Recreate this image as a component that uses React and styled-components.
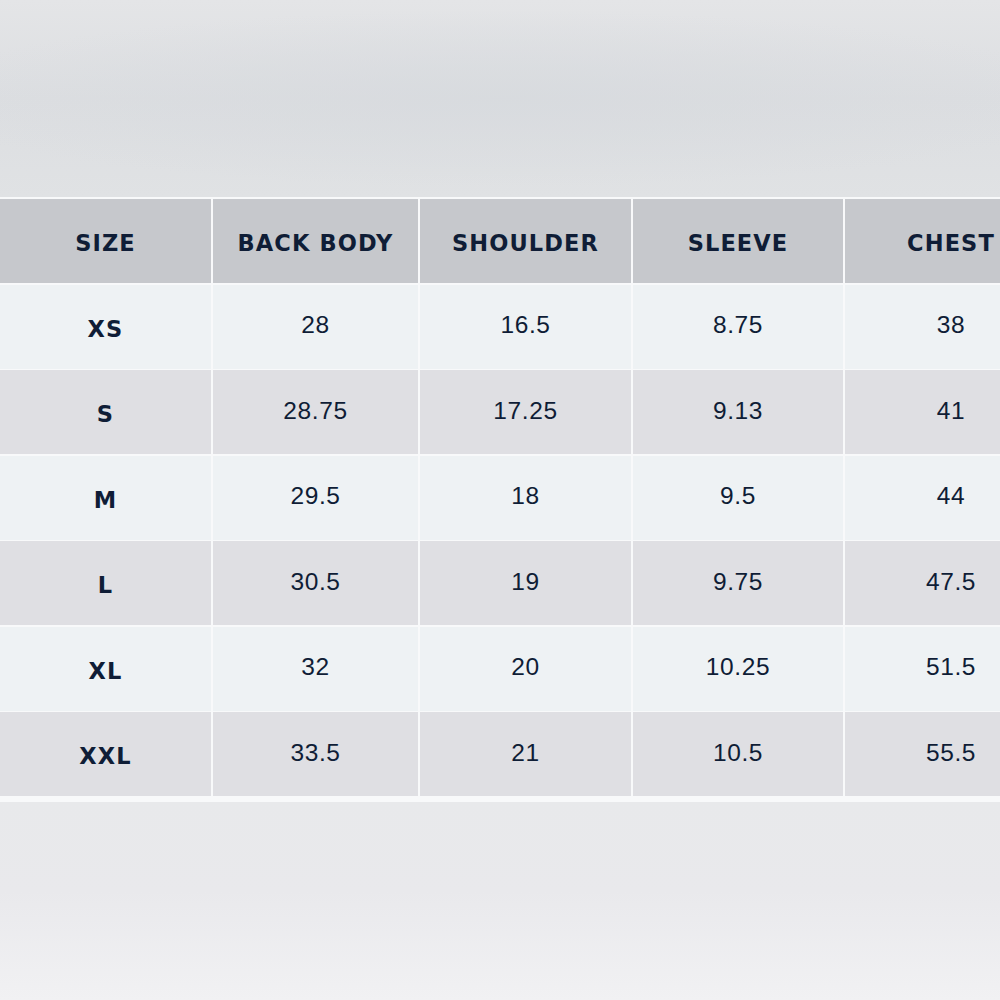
import React from "react";
import styled, { createGlobalStyle } from "styled-components";

const GlobalStyle = createGlobalStyle`
  html, body {
    margin: 0;
    padding: 0;
    background: #e6e7e9;
  }
  body {
    width: 1000px;
    height: 1000px;
    overflow: hidden;
  }
`;

const COLUMNS = ["SIZE", "BACK BODY", "SHOULDER", "SLEEVE", "CHEST"];

const ROWS = [
  ["XS", "28", "16.5", "8.75", "38"],
  ["S", "28.75", "17.25", "9.13", "41"],
  ["M", "29.5", "18", "9.5", "44"],
  ["L", "30.5", "19", "9.75", "47.5"],
  ["XL", "32", "20", "10.25", "51.5"],
  ["XXL", "33.5", "21", "10.5", "55.5"],
];

function App() {
  return (
    <>
      <GlobalStyle />
      <Page>
        <TopBand />
        <TableFrame>
          <Table>
            {COLUMNS.map((col) => (
              <HeadCell key={col}>{col}</HeadCell>
            ))}
            {ROWS.map((row, i) =>
              row.map((value, j) =>
                j === 0 ? (
                  <LabelCell key={`${i}-${j}`} $even={i % 2 === 1}>
                    {value}
                  </LabelCell>
                ) : (
                  <ValueCell key={`${i}-${j}`} $even={i % 2 === 1}>
                    {value}
                  </ValueCell>
                )
              )
            )}
          </Table>
        </TableFrame>
        <BottomBand />
      </Page>
    </>
  );
}

const Page = styled.div`
  width: 1000px;
  height: 1000px;
  display: flex;
  flex-direction: column;
  overflow: hidden;
`;

const TopBand = styled.div`
  height: 197px;
  flex-shrink: 0;
  background:
    radial-gradient(ellipse 60% 45% at 50% 50%, rgba(215, 218, 222, 0.8), rgba(215, 218, 222, 0) 100%),
    linear-gradient(180deg, #e4e5e7 0%, #dcdee1 50%, #e0e2e4 100%);
`;

const TableFrame = styled.div`
  width: 1100px;
  flex-shrink: 0;
  background: #f8f9fa;
  padding: 2px 0 6px 0;
`;

const Table = styled.div`
  display: grid;
  grid-template-columns: 211px 205px 211px 210px 212px;
  grid-auto-rows: 84px;
  column-gap: 2px;
  row-gap: 1.5px;
`;

const Cell = styled.div`
  display: flex;
  align-items: center;
  justify-content: center;
  color: #0f1d36;
  background: ${(props) => (props.$even ? "#dfdfe3" : "#eef2f4")};
`;

const HeadCell = styled(Cell)`
  background: #c6c8cc;
  font-family: "DejaVu Sans", "Liberation Sans", sans-serif;
  font-weight: 700;
  font-size: 22.5px;
  letter-spacing: 1.1px;
  padding-top: 3px;
`;

const LabelCell = styled(Cell)`
  font-family: "DejaVu Sans", "Liberation Sans", sans-serif;
  font-weight: 700;
  font-size: 22.5px;
  letter-spacing: 1.1px;
  padding-top: 4px;
`;

const ValueCell = styled(Cell)`
  font-family: "Liberation Sans", Arial, sans-serif;
  font-weight: 400;
  font-size: 24.5px;
  letter-spacing: 0.6px;
  padding-bottom: 3px;
`;

const BottomBand = styled.div`
  flex: 1;
  background: linear-gradient(180deg, #e8e9eb 0%, #e9e9ec 45%, #f1f1f3 100%);
`;

export default App;
